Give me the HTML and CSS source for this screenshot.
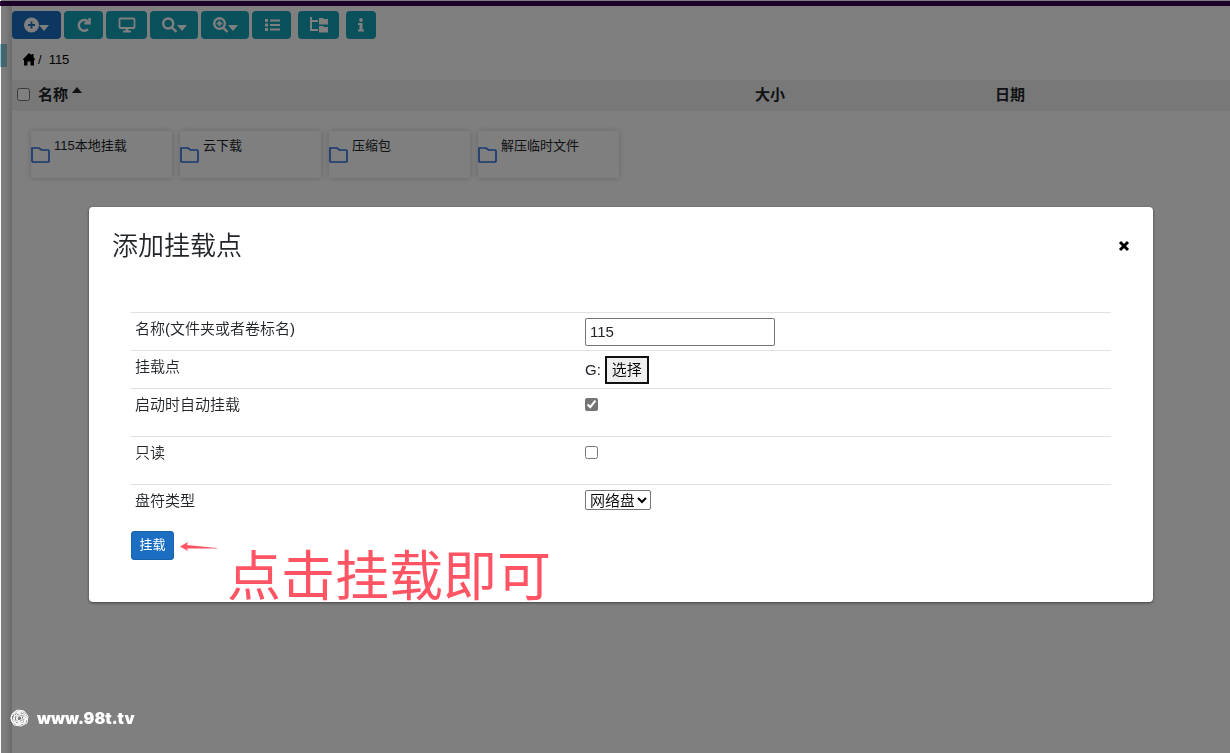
FILE: index.html
```html
<!DOCTYPE html>
<html lang="zh-CN">
<head>
<meta charset="utf-8">
<meta name="viewport" content="width=device-width, initial-scale=1">
<title>115</title>
<link rel="stylesheet" href="styles.css">
</head>
<body>
<div class="app">
  <div class="topbar"></div>
  <div class="layout">
    <aside class="sidebar"><div class="sidebar-active"></div></aside>
    <main class="content">
      <div class="toolbar">
        <button class="tool tool-primary" type="button" aria-label="添加">
          <svg width="15" height="16" viewBox="0 0 15 16"><circle cx="7.500" cy="8" r="7.500" fill="currentColor"/><path class="cut" d="M7.500 4.500v7M4 8h7"/></svg>
          <svg class="caret" width="10" height="6" viewBox="0 0 10 6"><path d="M0 0h10L5 6z" fill="currentColor"/></svg>
        </button>
        <button class="tool tool-mid" type="button" aria-label="刷新">
          <svg width="16" height="16" viewBox="0 0 16 16"><path class="line" d="M12 12.200A5.400 5.400 0 1 1 12 4.500M13.600 1V6.200H8.400"/></svg>
        </button>
        <button class="tool tool-wide" type="button" aria-label="桌面">
          <svg width="18" height="16" viewBox="0 0 18 16"><rect x="1.500" y="1.500" width="15" height="9.500" rx="1" class="line thin"/><path d="M7.500 11h3v2.500h2.500v2h-8v-2h2.500z" fill="currentColor"/></svg>
        </button>
        <button class="tool" type="button" aria-label="搜索">
          <svg width="15" height="16" viewBox="0 0 15 16"><circle cx="6.200" cy="6.500" r="5" class="line"/><path class="line" d="M10 10.500l4.500 4.500"/></svg>
          <svg class="caret" width="10" height="6" viewBox="0 0 10 6"><path d="M0 0h10L5 6z" fill="currentColor"/></svg>
        </button>
        <button class="tool" type="button" aria-label="放大">
          <svg width="15" height="16" viewBox="0 0 15 16"><circle cx="6.500" cy="6.500" r="5.300" class="line"/><path class="line thin" d="M6.500 3.800v5.400M3.800 6.500h5.400"/><path class="line" d="M10 10.500l4.500 4.500"/></svg>
          <svg class="caret" width="10" height="6" viewBox="0 0 10 6"><path d="M0 0h10L5 6z" fill="currentColor"/></svg>
        </button>
        <button class="tool tool-mid" type="button" aria-label="列表">
          <svg width="16" height="16" viewBox="0 0 16 16"><path d="M1 2h3v3H1zM1 6.500h3v3H1zM1 11h3v3H1zM6 2.500h10v2H6zM6 7h10v2H6zM6 11.500h10v2H6z" fill="currentColor"/></svg>
        </button>
        <button class="tool tool-wide tool-apart" type="button" aria-label="目录树">
          <svg width="18" height="16" viewBox="0 0 18 16"><path d="M0 0h2v3h6v2H2v7h6v2H0z" fill="currentColor"/><path d="M9 1h4l1 1h4v5.500H9zM9 9h4l1 1h4v5.500H9z" fill="currentColor"/></svg>
        </button>
        <button class="tool tool-small tool-apart" type="button" aria-label="信息">
          <svg width="8" height="16" viewBox="0 0 8 16"><circle cx="4" cy="3" r="1.900" fill="currentColor"/><path d="M1 6h4.500v6.500H7v2H1v-2h1.500V8H1z" fill="currentColor"/></svg>
        </button>
      </div>
      <nav class="crumbs" aria-label="路径">
        <a href="#" aria-label="首页"><svg width="14" height="13" viewBox="0 0 14 13"><path d="M7 0l2.500 2.300V1h2v3.200L13 6.300V7h-1v5.500H8.500V8.500h-3v4H2V7H1v-.700z" fill="#000"/></svg></a>
        <span>/</span><span>115</span>
      </nav>
      <table class="list-head">
        <colgroup><col class="col-check"><col><col class="col-size"><col class="col-date"></colgroup>
        <tr>
          <th><input type="checkbox" aria-label="全选"></th>
          <th>名称<svg class="sort" width="10" height="6" viewBox="0 0 10 6"><path d="M0 6L5 0l5 6z" fill="currentColor"/></svg></th>
          <th>大小</th>
          <th>日期</th>
        </tr>
      </table>
      <div class="folders">
        <div class="folder"><svg width="19" height="18" viewBox="0 0 19 18"><path d="M1 2h7l2.500 2H17a1 1 0 0 1 1 1v10a1 1 0 0 1-1 1H2a1 1 0 0 1-1-1z"/></svg><span>115本地挂载</span></div>
        <div class="folder"><svg width="19" height="18" viewBox="0 0 19 18"><path d="M1 2h7l2.500 2H17a1 1 0 0 1 1 1v10a1 1 0 0 1-1 1H2a1 1 0 0 1-1-1z"/></svg><span>云下载</span></div>
        <div class="folder"><svg width="19" height="18" viewBox="0 0 19 18"><path d="M1 2h7l2.500 2H17a1 1 0 0 1 1 1v10a1 1 0 0 1-1 1H2a1 1 0 0 1-1-1z"/></svg><span>压缩包</span></div>
        <div class="folder"><svg width="19" height="18" viewBox="0 0 19 18"><path d="M1 2h7l2.500 2H17a1 1 0 0 1 1 1v10a1 1 0 0 1-1 1H2a1 1 0 0 1-1-1z"/></svg><span>解压临时文件</span></div>
      </div>
    </main>
  </div>
</div>

<div class="backdrop">
  <section class="modal" role="dialog" aria-labelledby="modal-title">
    <header class="modal-head">
      <h1 id="modal-title">添加挂载点</h1>
      <button class="close" type="button" aria-label="关闭"><svg width="12" height="12" viewBox="0 0 12 12"><path d="M2 2l8 8M10 2l-8 8"/></svg></button>
    </header>
    <form class="modal-body">
      <table class="fields">
        <colgroup><col class="col-label"><col></colgroup>
        <tr class="row-control"><td><label for="name">名称(文件夹或者卷标名)</label></td><td><input class="text" id="name" type="text" value="115"></td></tr>
        <tr class="row-control"><td>挂载点</td><td><div class="drive"><span>G:</span><button class="pick" type="button">选择</button></div></td></tr>
        <tr class="row-tall"><td><label for="auto">启动时自动挂载</label></td><td><input id="auto" type="checkbox" checked></td></tr>
        <tr class="row-tall"><td><label for="readonly">只读</label></td><td><input id="readonly" type="checkbox"></td></tr>
        <tr class="row-last"><td><label for="kind">盘符类型</label></td><td><select id="kind"><option>网络盘</option></select></td></tr>
      </table>
      <button class="submit" type="button">挂载</button>
    </form>
    <svg class="arrow" width="38" height="10" viewBox="0 0 38 10"><path d="M0 4.500L8 0 7 3l30 3v.500L7 6.500 8 9z" fill="#ff5464"/></svg>
    <div class="note">点击挂载即可</div>
  </section>
</div>

<div class="watermark">
  <svg width="19" height="18" viewBox="0 0 19 18"><path d="M2 5L7 1l7 1 4 5-1 7-6 3-7-1-3-6zM1 8l4-5 8-1 4 6-2 6-7 2-6-3zM5 4l7-1 4 5-2 6-7 1-4-4zM4 8l4-4 6 2 1 5-5 3-5-2zM6 7l5-2 3 4-3 4-4-1zM8 7l3 0 1 3-3 2-2-2zM1 11l5 4 8-1 3-5"/></svg>
  <span>www.98t.tv</span>
</div>
</body>
</html>
```
FILE: styles.css
```css
* { box-sizing: border-box; }

body {
  margin: 0;
  background: #fff;
  color: #212529;
  font: 15px/22px "Liberation Sans", "Noto Sans CJK SC", sans-serif;
}

button, input, select { font: inherit; color: inherit; }
input[type="checkbox"] { display: block; width: 13px; height: 13px; margin: 0; }

.app { display: flex; flex-direction: column; min-height: 100vh; }
.topbar { height: 6px; border-top: 1px solid #fff; background: #3a0050; }
.layout { flex: 1; display: flex; }
.sidebar {
  width: 12px;
  padding-top: 38px;
  background: linear-gradient(to right, #fafafa 40%, #d8d8d8);
}
.sidebar-active { width: 7px; height: 23px; background: #8cc8d8; }
.content { flex: 1; min-width: 0; }

.toolbar { display: flex; gap: 3px; height: 43px; padding-top: 5px; }
.tool {
  display: flex;
  align-items: center;
  justify-content: center;
  width: 48px;
  height: 28px;
  padding: 0;
  border: 0;
  border-radius: 4px;
  background: #17a2b8;
  color: #fff;
}
.tool-primary { width: 49px; background: #1b6ec2; }
.tool-mid { width: 39px; }
.tool-wide { width: 41px; }
.tool-small { width: 30px; }
.tool-apart { margin-left: 4px; }
.caret { margin-top: 6px; }
.line { fill: none; stroke: currentColor; stroke-width: 2.4; }
.thin { stroke-width: 1.8; }
.cut { fill: none; stroke: #1b6ec2; stroke-width: 1.8; }

.crumbs {
  display: flex;
  align-items: center;
  height: 31px;
  padding: 0 0 10px 10px;
  gap: 2px;
  font-size: 13px;
  color: #000;
}
.crumbs a { display: flex; }
.crumbs span + span { margin-left: 5px; }

.list-head {
  width: 100%;
  height: 31px;
  table-layout: fixed;
  border-collapse: collapse;
  background: #f0f0f0;
}
.list-head th { padding: 0 0 2px; text-align: left; }
.list-head th:first-child { padding-left: 5px; }
.col-check { width: 26px; }
.col-size { width: 240px; }
.col-date { width: 235px; }
.sort { margin: 0 0 7px 4px; }

.folders { display: flex; flex-wrap: wrap; gap: 8px; padding: 20px 19px; }
.folder {
  display: flex;
  gap: 4px;
  width: 141px;
  height: 47px;
  box-shadow: 0 0 6px #ccc;
  font-size: 13px;
}
.folder svg { flex: none; margin-top: 15px; fill: none; stroke: #2f72e0; stroke-width: 1.7; }
.folder span { padding-top: 4px; }

.backdrop {
  position: fixed;
  inset: 0 0 0 1px;
  padding: 207px 77px 0 88px;
  background: rgba(0, 0, 0, 0.5);
}
.modal {
  position: relative;
  padding: 23px;
  border-radius: 4px;
  background: #fff;
  box-shadow: 0 1px 3px rgba(0, 0, 0, 0.5);
}
.modal-head { display: flex; justify-content: space-between; align-items: center; }
.modal-head h1 { margin: 0; font-size: 26px; line-height: 32px; font-weight: 350; }
.close { display: flex; padding: 0; border: 0; background: none; }
.close path { stroke: #000; stroke-width: 3; }
.modal-body { padding: 50px 19px 19px; }

.fields { width: 100%; table-layout: fixed; border-collapse: collapse; font-weight: 350; }
.fields td { padding: 5px 4px 4px; border-top: 1px solid #dee2e6; vertical-align: top; }
.fields input[type="checkbox"] { margin: 4px 0 0; accent-color: #757575; }
.col-label { width: 450px; }
.row-control { height: 38px; }
.row-tall { height: 48px; }
.row-last { height: 46px; }
.text {
  display: block;
  width: 190px;
  height: 28px;
  padding: 0 4px 2px;
  border: 1px solid #767676;
  border-radius: 2px;
}
.drive { display: flex; align-items: center; gap: 4px; }
.pick { height: 28px; padding: 0 5px; border: 2px solid #111; background: #efefef; line-height: 22px; color: #000; }
.fields select {
  display: block;
  width: 66px;
  height: 20px;
  padding: 0;
  border: 1px solid #767676;
  border-radius: 2px;
  background: #fff;
  color: #000;
}
.submit {
  display: block;
  width: 43px;
  height: 29px;
  padding: 0;
  border: 1px solid #1861ac;
  border-radius: 3px;
  background: #1b6ec2;
  color: #fff;
  font-size: 13px;
}
.arrow { position: absolute; left: 91px; top: 335px; }
.note {
  position: absolute;
  left: 138px;
  top: 338px;
  color: #ff5464;
  font-size: 54px;
  line-height: 64px;
  white-space: nowrap;
}

.watermark {
  position: fixed;
  left: 10px;
  bottom: 24px;
  display: flex;
  align-items: center;
  gap: 8px;
  color: #fff;
  font: 900 16px/22px Inter, sans-serif;
}
.watermark svg { fill: none; stroke: #fff; stroke-width: 1; }
```
